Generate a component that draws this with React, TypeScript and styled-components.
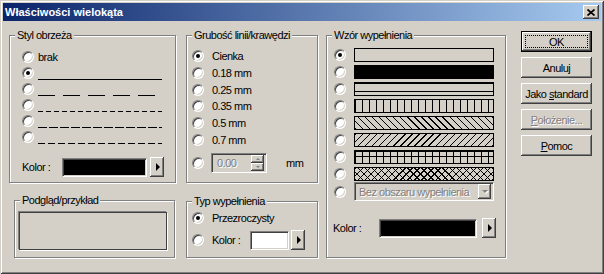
import React from "react";
import styled, { createGlobalStyle, css } from "styled-components";

const face = "#d4d0c8";

const GlobalStyle = createGlobalStyle`
  html, body {
    margin: 0;
    padding: 0;
    background: ${face};
  }
  body {
    font-family: "Liberation Sans", Arial, sans-serif;
    font-size: 11px;
    letter-spacing: -0.5px;
    color: #000;
  }
`;

const raised = css`
  background-color: ${face};
  box-shadow: inset -1px -1px 0 #404040, inset 1px 1px 0 #fff,
    inset -2px -2px 0 #808080, inset 2px 2px 0 ${face};
`;

const sunken = css`
  box-sizing: border-box;
  border: 1px solid;
  border-color: #808080 #fff #fff #808080;
  box-shadow: inset 1px 1px 0 #404040, inset -1px -1px 0 ${face};
`;

const Window = styled.div`
  box-sizing: border-box;
  width: 604px;
  height: 274px;
  padding: 3px;
  background: ${face};
  box-shadow: inset 1px 1px 0 ${face}, inset -1px -1px 0 #404040,
    inset 2px 2px 0 #fff, inset -2px -2px 0 #808080;
  display: flex;
  flex-direction: column;
`;

const TitleBar = styled.div`
  flex: none;
  height: 18px;
  display: flex;
  align-items: center;
  padding: 0 2px 0 2px;
  background: linear-gradient(to right, #0a246a, #a6caf0);
  color: #fff;
  font-weight: bold;
  letter-spacing: 0;
`;

const Title = styled.span`
  flex: 1;
  white-space: nowrap;
`;

const CloseButton = styled.div`
  ${raised};
  width: 16px;
  height: 14px;
  display: flex;
  align-items: center;
  justify-content: center;
`;

const Body = styled.div`
  display: flex;
  align-items: flex-start;
  padding: 10px 0 0 6px;
`;

const Column = styled.div<{ $ml: number }>`
  display: flex;
  flex-direction: column;
  align-items: flex-start;
  margin: 4px 0 0 ${(p) => p.$ml}px;
`;

const Group = styled.div<{ $w: number; $h: number; $mt?: number; $ml?: number }>`
  box-sizing: border-box;
  width: ${(p) => p.$w}px;
  height: ${(p) => p.$h}px;
  margin: ${(p) => p.$mt ?? 0}px 0 0 ${(p) => p.$ml ?? 0}px;
  border: 1px solid #808080;
  box-shadow: inset 1px 1px 0 #fff, 1px 1px 0 #fff;
  display: flex;
  flex-direction: column;
  align-items: flex-start;
`;

const Legend = styled.div`
  margin: -7px 0 0 5px;
  padding: 0 2px;
  height: 13px;
  line-height: 13px;
  background: ${face};
  white-space: nowrap;
`;

const List = styled.div<{ $mt: number; $gap?: number }>`
  display: flex;
  flex-direction: column;
  gap: ${(p) => p.$gap ?? 0}px;
  margin-top: ${(p) => p.$mt}px;
`;

const Row = styled.div<{ $h: number; $pl: number; $gap: number; $mt?: number }>`
  display: flex;
  align-items: center;
  height: ${(p) => p.$h}px;
  padding-left: ${(p) => p.$pl}px;
  gap: ${(p) => p.$gap}px;
  margin-top: ${(p) => p.$mt ?? 0}px;
  white-space: nowrap;
`;

const Radio = styled.span<{ $checked?: boolean }>`
  flex: none;
  box-sizing: border-box;
  width: 12px;
  height: 12px;
  border-radius: 50%;
  background: #fff;
  border: 1px solid;
  border-color: #808080 #fff #fff #808080;
  box-shadow: inset 1px 1px 0 #404040, inset -1px -1px 0 ${face};
  display: flex;
  align-items: center;
  justify-content: center;
  &::after {
    content: "";
    display: ${(p) => (p.$checked ? "block" : "none")};
    width: 4px;
    height: 4px;
    border-radius: 50%;
    background: #000;
  }
`;

const LineSample = styled.div<{ $dash: number; $period: number }>`
  align-self: stretch;
  width: 124px;
  background-image: repeating-linear-gradient(
    90deg,
    #000 0 ${(p) => p.$dash}px,
    transparent ${(p) => p.$dash}px ${(p) => p.$period}px
  );
  background-size: 100% 1px;
  background-position: 0 14px;
  background-repeat: no-repeat;
`;

const Label = styled.span<{ $w?: number; $ml?: number }>`
  display: inline-block;
  width: ${(p) => (p.$w ? `${p.$w}px` : "auto")};
  margin-left: ${(p) => p.$ml ?? 0}px;
`;

const ColorBox = styled.div<{ $w: number; $color: string }>`
  ${sunken};
  flex: none;
  width: ${(p) => p.$w}px;
  height: 19px;
  background: ${(p) => p.$color};
`;

const ArrowButton = styled.div<{ $ml: number }>`
  ${raised};
  flex: none;
  width: 14px;
  height: 20px;
  margin-left: ${(p) => p.$ml}px;
  display: flex;
  align-items: center;
  justify-content: center;
  &::before {
    content: "";
    border-left: 4px solid #000;
    border-top: 4px solid transparent;
    border-bottom: 4px solid transparent;
    margin-left: 1px;
  }
`;

const Preview = styled.div`
  box-sizing: border-box;
  width: 148px;
  height: 38px;
  margin: 5px 0 0 4px;
  border: 1px solid #404040;
  box-shadow: -1px -1px 0 #808080, 1px 1px 0 #fff;
`;

const SpinEdit = styled.div`
  ${sunken};
  width: 56px;
  height: 20px;
  margin-left: 7px;
  background: ${face};
  display: flex;
  align-items: center;
  padding: 2px 2px 2px 5px;
`;

const DisabledText = styled.span`
  flex: 1;
  color: #808080;
  text-shadow: 1px 1px 0 #fff;
`;

const SpinButtons = styled.div`
  display: flex;
  flex-direction: column;
  width: 13px;
  height: 16px;
`;

const SpinPart = styled.div<{ $up?: boolean }>`
  ${raised};
  flex: 1;
  display: flex;
  align-items: center;
  justify-content: center;
  &::before {
    content: "";
    border-left: 2px solid transparent;
    border-right: 2px solid transparent;
    ${(p) =>
      p.$up
        ? "border-bottom: 2px solid #808080;"
        : "border-top: 2px solid #808080;"}
  }
`;

const Unit = styled.span`
  margin-left: 19px;
`;

const Swatch = styled.div<{ $bg: string; $pos?: string }>`
  box-sizing: border-box;
  width: 140px;
  height: 14px;
  border: 1px solid #000;
  background-color: ${face};
  background-image: ${(p) => p.$bg};
  background-position: ${(p) => p.$pos ?? "0 0"};
`;

const Combo = styled.div`
  ${sunken};
  width: 140px;
  height: 19px;
  background: ${face};
  display: flex;
  align-items: center;
  padding: 2px 2px 2px 4px;
`;

const DropButton = styled.div`
  ${raised};
  width: 13px;
  height: 15px;
  display: flex;
  align-items: center;
  justify-content: center;
  &::before {
    content: "";
    border-left: 3px solid transparent;
    border-right: 3px solid transparent;
    border-top: 3px solid #808080;
    filter: drop-shadow(1px 1px 0 #fff);
  }
`;

const ButtonColumn = styled.div`
  display: flex;
  flex-direction: column;
  gap: 5px;
  margin-left: 15px;
`;

const Button = styled.div<{ $default?: boolean; $disabled?: boolean }>`
  ${raised};
  position: relative;
  box-sizing: border-box;
  width: 71px;
  height: 21px;
  display: flex;
  align-items: center;
  justify-content: center;
  white-space: nowrap;
  color: ${(p) => (p.$disabled ? "#808080" : "#000")};
  text-shadow: ${(p) => (p.$disabled ? "1px 1px 0 #fff" : "none")};
  ${(p) =>
    p.$default &&
    css`
      border: 1px solid #000;
      &::after {
        content: "";
        position: absolute;
        inset: 3px;
        border: 1px dotted #000;
      }
    `}
`;

const lineStyles = [
  { dash: 124, period: 124 },
  { dash: 17, period: 25 },
  { dash: 5, period: 8 },
  { dash: 9, period: 11 },
  { dash: 7, period: 10 },
];

const thicknesses = ["Cienka", "0.18 mm", "0.25 mm", "0.35 mm", "0.5 mm", "0.7 mm"];

const hatch = (deg: number, period: number) =>
  `repeating-linear-gradient(${deg}deg, #000 0 1px, transparent 1px ${period}px)`;

const patterns: { bg: string; pos?: string }[] = [
  { bg: "none" },
  { bg: "linear-gradient(#000, #000)" },
  { bg: hatch(180, 8) },
  { bg: hatch(90, 7) },
  { bg: hatch(45, 5) },
  { bg: hatch(-45, 5) },
  { bg: `${hatch(90, 7)}, ${hatch(180, 7)}`, pos: "0 0, 0 5px" },
  { bg: `${hatch(45, 5)}, ${hatch(-45, 5)}` },
];

const CloseIcon = () => (
  <svg width="8" height="7" viewBox="0 0 8 7">
    <path d="M0.5 0.5L7.5 6.5M7.5 0.5L0.5 6.5" stroke="#000" strokeWidth="1.7" />
  </svg>
);

export default function App() {
  return (
    <>
      <GlobalStyle />
      <Window>
        <TitleBar>
          <Title>Właściwości wielokąta</Title>
          <CloseButton>
            <CloseIcon />
          </CloseButton>
        </TitleBar>
        <Body>
          <Column $ml={0}>
            <Group $w={167} $h={148}>
              <Legend>Styl obrzeża</Legend>
              <List $mt={7}>
                <Row $h={16} $pl={12} $gap={4}>
                  <Radio />
                  <span>brak</span>
                </Row>
                {lineStyles.map((l, i) => (
                  <Row key={i} $h={16} $pl={12} $gap={4}>
                    <Radio $checked={i === 0} />
                    <LineSample $dash={l.dash} $period={l.period} />
                  </Row>
                ))}
              </List>
              <Row $h={20} $pl={12} $gap={0} $mt={12}>
                <Label $w={40}>Kolor :</Label>
                <ColorBox $w={85} $color="#000" />
                <ArrowButton $ml={3} />
              </Row>
            </Group>
            <Group $w={161} $h={58} $mt={17} $ml={5}>
              <Legend>Podgląd/przykład</Legend>
              <Preview />
            </Group>
          </Column>

          <Column $ml={10}>
            <Group $w={132} $h={148}>
              <Legend>Grubość linii/krawędzi</Legend>
              <List $mt={6}>
                {thicknesses.map((t, i) => (
                  <Row key={t} $h={16.67} $pl={5} $gap={8}>
                    <Radio $checked={i === 0} />
                    <span>{t}</span>
                  </Row>
                ))}
              </List>
              <Row $h={20} $pl={5} $gap={0} $mt={5}>
                <Radio />
                <SpinEdit>
                  <DisabledText>0.00</DisabledText>
                  <SpinButtons>
                    <SpinPart $up />
                    <SpinPart />
                  </SpinButtons>
                </SpinEdit>
                <Unit>mm</Unit>
              </Row>
            </Group>
            <Group $w={132} $h={57} $mt={18}>
              <Legend>Typ wypełnienia</Legend>
              <Row $h={16} $pl={5} $gap={8} $mt={2}>
                <Radio $checked />
                <span>Przezroczysty</span>
              </Row>
              <Row $h={20} $pl={5} $gap={0} $mt={4}>
                <Radio />
                <Label $w={38} $ml={8}>
                  Kolor :
                </Label>
                <ColorBox $w={39} $color="#fff" />
                <ArrowButton $ml={2} />
              </Row>
            </Group>
          </Column>

          <Column $ml={8}>
            <Group $w={180} $h={223}>
              <Legend>Wzór wypełnienia</Legend>
              <List $mt={6} $gap={3}>
                {patterns.map((p, i) => (
                  <Row key={i} $h={14} $pl={7} $gap={8}>
                    <Radio $checked={i === 0} />
                    <Swatch $bg={p.bg} $pos={p.pos} />
                  </Row>
                ))}
                <Row $h={19} $pl={7} $gap={8} $mt={-2}>
                  <Radio />
                  <Combo>
                    <DisabledText>Bez obszaru wypełnienia</DisabledText>
                    <DropButton />
                  </Combo>
                </Row>
              </List>
              <Row $h={20} $pl={6} $gap={0} $mt={17}>
                <Label $w={46}>Kolor :</Label>
                <ColorBox $w={98} $color="#000" />
                <ArrowButton $ml={5} />
              </Row>
            </Group>
          </Column>

          <ButtonColumn>
            <Button $default>OK</Button>
            <Button>Anuluj</Button>
            <Button>
              Jako&nbsp;<u>s</u>tandard
            </Button>
            <Button $disabled>
              <u>P</u>ołożenie...
            </Button>
            <Button>
              <u>P</u>omoc
            </Button>
          </ButtonColumn>
        </Body>
      </Window>
    </>
  );
}
